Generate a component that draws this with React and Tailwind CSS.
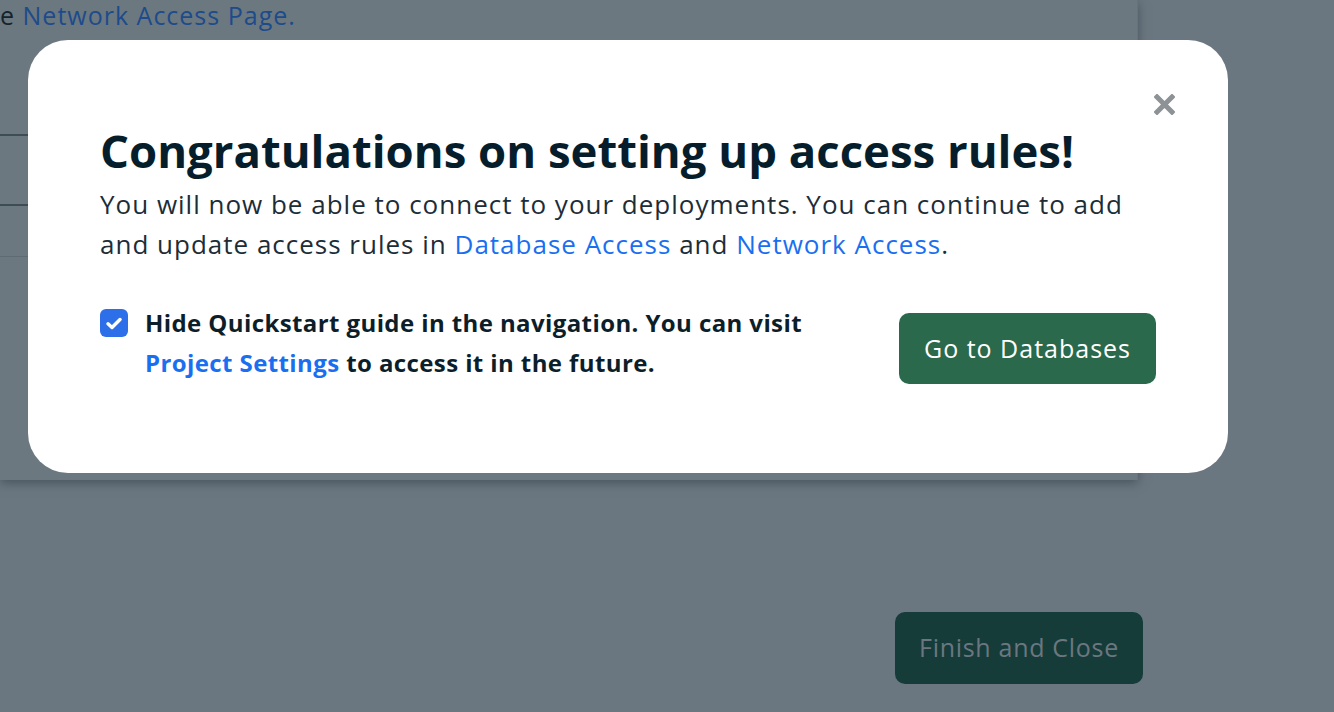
import React from 'react';

const CloseIcon = () => (
  <svg width="21" height="21" viewBox="0 0 21 21" fill="none">
    <path d="M3 3L18 18M18 3L3 18" stroke="#8c9295" strokeWidth="5" strokeLinecap="square" />
  </svg>
);

const CheckIcon = () => (
  <svg width="16" height="13" viewBox="0 0 16 13" fill="none">
    <path d="M2 6.8L6 10.5L14 2.5" stroke="white" strokeWidth="3.4" strokeLinecap="round" strokeLinejoin="round" />
  </svg>
);

const App = () => {
  return (
    <div className="relative w-[1334px] h-[712px] overflow-hidden bg-[#6b7780] font-['Open_Sans',sans-serif]">
      {/* page behind the modal, dimmed by the overlay */}
      <div className="w-[1138px] h-[480px] bg-[#6c7880] border-r border-[#67737b] shadow-[0_3px_10px_rgba(40,55,65,0.55)]">
        <p className="text-[25px] leading-[30px] tracking-[1px] text-[#14242d]">
          e <span className="text-[#1d4b8b]">Network Access Page.</span>
        </p>
        <div className="mt-[104px] h-[2px] bg-[#3e4c54]" />
        <div className="mt-[68px] h-[2px] bg-[#3e4c54]" />
        <div className="mt-[50px] h-px bg-[#5f6b73]" />
      </div>
      <div className="flex justify-end pr-[191px] pt-[132px]">
        <button className="w-[248px] h-[72px] rounded-[10px] bg-[#163c3a] text-[#6b7780] text-[25px] tracking-[0.7px]">
          Finish and Close
        </button>
      </div>

      {/* modal */}
      <div className="absolute left-[28px] top-[40px] w-[1200px] h-[433px] rounded-[40px] bg-white pl-[72px] pr-[72px] pt-[82px]">
        <button className="absolute top-[54px] right-[53px]">
          <CloseIcon />
        </button>
        <h1 className="text-[45.5px] leading-[56px] font-bold text-[#061e2b] whitespace-nowrap">
          Congratulations on setting up access rules!
        </h1>
        <p className="mt-[6px] w-[1045px] text-[26px] leading-[40px] tracking-[1px] text-[#1c2d38]">
          You will now be able to connect to your deployments. You can continue to add and update access rules in{' '}
          <span className="text-[#1a6ff0]">Database Access</span> and{' '}
          <span className="text-[#1a6ff0]">Network Access</span>.
        </p>
        <div className="mt-[39px] flex items-start justify-between">
          <div className="flex items-start gap-[17px]">
            <div className="mt-[6px] w-[28px] h-[28px] rounded-[6px] bg-[#2d6fe8] flex items-center justify-center">
              <CheckIcon />
            </div>
            <p className="w-[690px] text-[24px] leading-[40px] font-bold tracking-[0.4px] text-[#0c1e29]">
              Hide Quickstart guide in the navigation. You can visit{' '}
              <span className="text-[#1a6ff0]">Project Settings</span> to access it in the future.
            </p>
          </div>
          <button className="mt-[10px] w-[257px] h-[71px] rounded-[10px] bg-[#2b694c] text-white text-[25px] tracking-[1px]">
            Go to Databases
          </button>
        </div>
      </div>
    </div>
  );
};

export default App;
